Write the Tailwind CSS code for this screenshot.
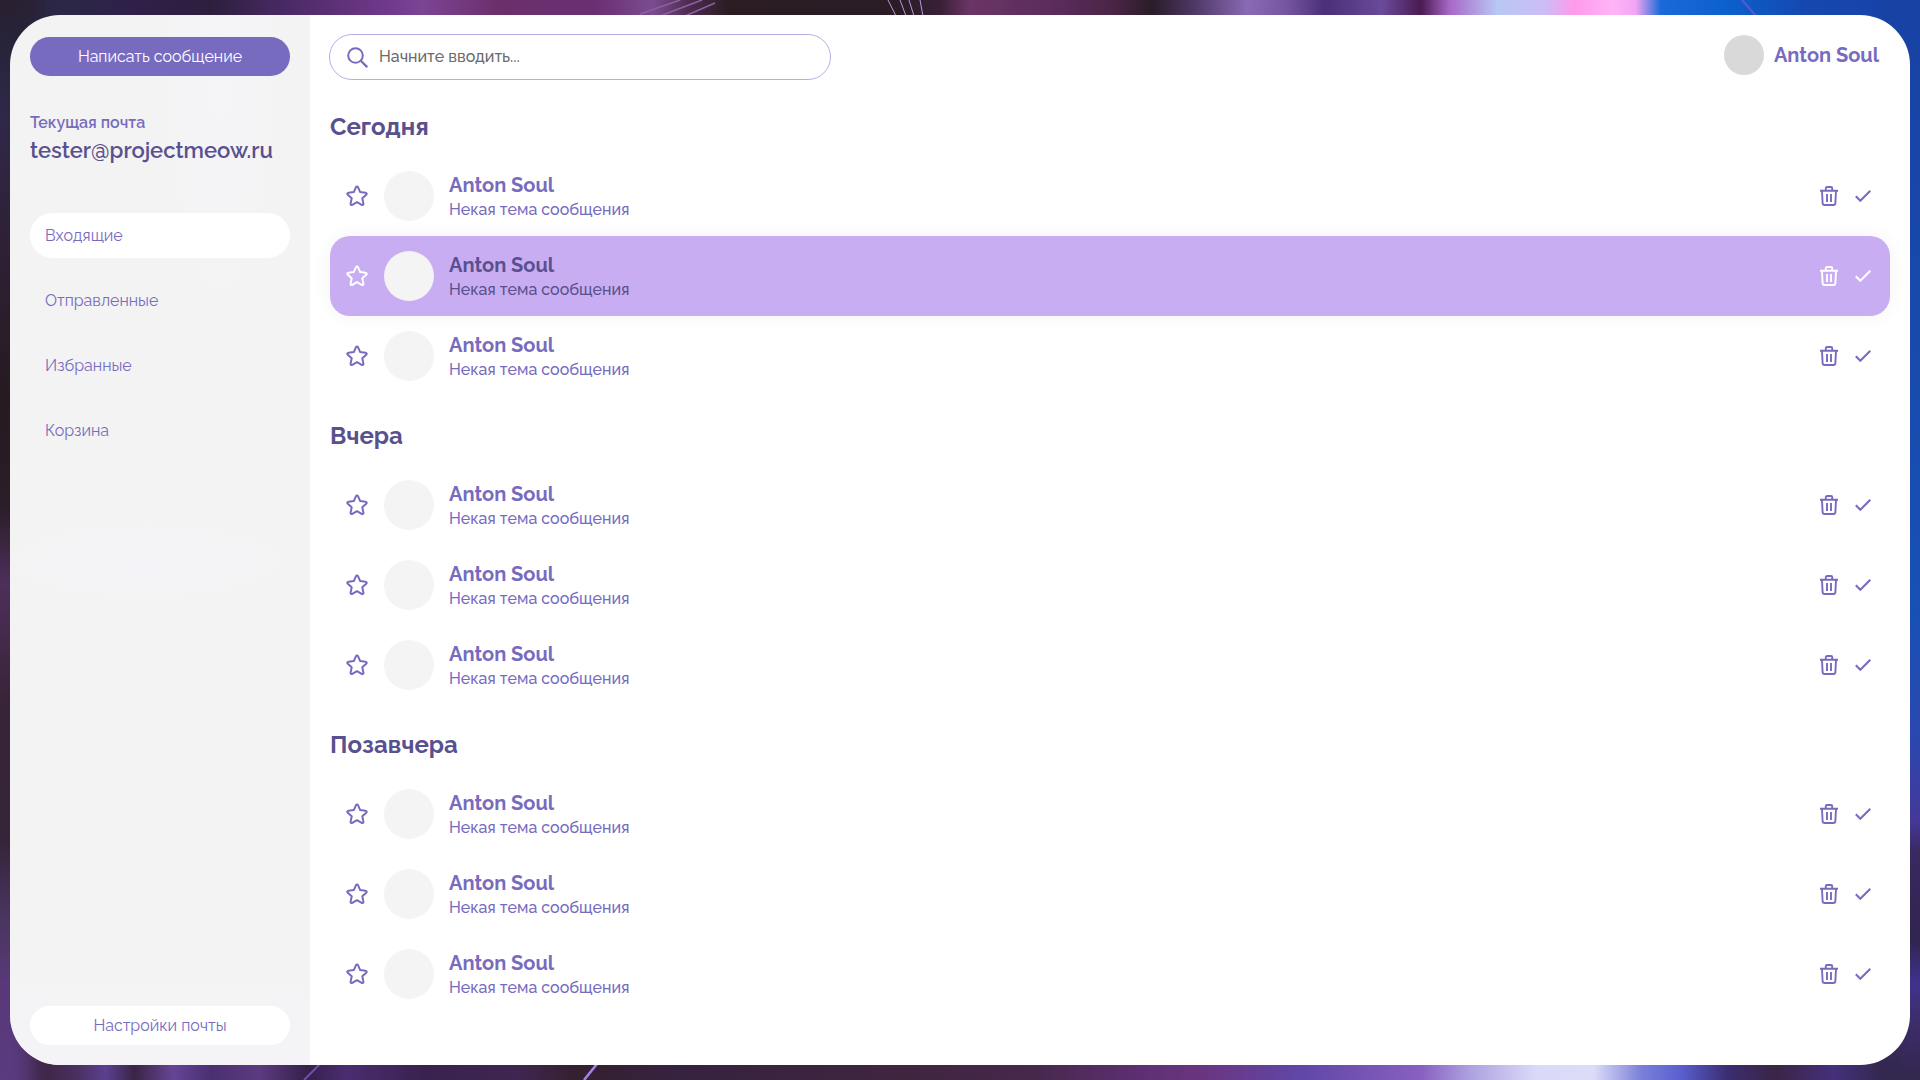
<!DOCTYPE html>
<html lang="ru">
<head>
<meta charset="utf-8">
<meta name="viewport" content="width=device-width, initial-scale=1">
<title>Входящие</title>
<script src="https://cdn.jsdelivr.net/npm/@tailwindcss/browser@4"></script>
</head>
<body class="font-['Raleway','Lato',sans-serif] text-base text-[#776bbf]">

<svg class="hidden" aria-hidden="true">
  <symbol id="star" viewBox="0 0 22 22"><path d="M11 1.500c.5 0 .8.3 1 .7l2.200 4.900 5.300.6c1.200.1 1.600 1.300.7 2.100l-3.900 3.500 1.100 5.300c.2 1.100-.8 1.800-1.700 1.300L11 17.200l-4.700 2.700c-.9.5-1.900-.2-1.700-1.300l1.100-5.300L1.800 9.800c-.9-.8-.5-2 .7-2.100l5.300-.6L10 2.200c.2-.4.5-.7 1-.7z" fill="none" stroke="currentColor" stroke-width="2" stroke-linejoin="round"/></symbol>
  <symbol id="trash" viewBox="0 0 18 20"><path d="M0 4.800h18M5.800 4.500V2.200Q5.800 1 7 1h4q1.200 0 1.200 1.200v2.300M2 5l.6 12q.1 2 2 2h8.800q1.900 0 2-2L16 5M7 8v8M11 8v8" fill="none" stroke="currentColor" stroke-width="1.900"/></symbol>
  <symbol id="check" viewBox="0 0 16 12"><path d="M.8 6.300 5.300 10.800 15.300.8" fill="none" stroke="currentColor" stroke-width="2"/></symbol>
</svg>

<div class="relative isolate flex min-h-screen px-[10px] py-[15px]">
  <!-- blurred wallpaper behind the window -->
  <div class="absolute inset-0 -z-10 overflow-hidden" aria-hidden="true">
    <div class="absolute inset-x-0 top-0 h-1/2 bg-[linear-gradient(90deg,#2b2033_0%,#2a2745_3%,#30204a_7%,#2c1f3e_11%,#4a2a66_15%,#70388a_20%,#7c4494_22%,#6b2f6b_26%,#6a2f72_31%,#7c4c90_34%,#4a2a4c_36%,#2a1c22_38%,#2a1c26_47%,#3a2038_49%,#6b3565_50.5%,#5a2c5c_55%,#4a2545_58%,#2a1c28_60%,#4a3560_62%,#8a6ab5_65%,#75559f_67%,#4a3078_69%,#6a4a9a_72%,#4a1a50_74%,#a868c8_75.5%,#b8c8f4_78%,#cdbcf6_80.5%,#ff9aea_82%,#ffb4f8_84%,#f0a4f4_85.2%,#1a6ad8_86.5%,#0c60cc_90%,#1548b0_94%,#1842a4_100%)]"></div>
    <div class="absolute inset-x-0 bottom-0 h-1/2 bg-[linear-gradient(90deg,#5a3b80_0%,#3a2540_2%,#4a3060_4%,#5a4090_5.5%,#3a2545_7%,#654496_9%,#4a3070_11%,#5c3a80_13.5%,#35204a_16%,#4a2d70_18%,#3a2250_22%,#3e2650_27%,#35202f_30%,#35223f_35%,#40253f_47%,#46284c_54%,#5c2f70_59%,#6a3580_62.5%,#6048a8_68%,#8860c0_74%,#aca0e0_76.500%,#dadaf8_80%,#dcdcf8_83%,#7a80d8_85.500%,#5a60d0_87.500%,#3a2d70_90%,#3a2545_92.500%,#44307c_95.500%,#34284f_98%,#33284e_100%)]"></div>
    <div class="absolute inset-y-0 left-0 w-12 bg-[linear-gradient(180deg,#2a2030_0%,#27243c_5%,#302848_11%,#2e2034_24%,#251b20_37%,#2a1e28_47%,#4d2f5a_54%,#382438_65%,#36243a_78%,#4a3560_85%,#583878_91%,#5a3b80_100%)] [mask-image:linear-gradient(90deg,#000_25%,transparent)]"></div>
    <div class="absolute inset-y-0 right-0 w-12 bg-[linear-gradient(180deg,#1842a4_0%,#1850b4_56%,#2a48b0_68%,#443898_76%,#3a2860_79%,#302450_87%,#40328c_91%,#3c2c68_95%,#33284e_100%)] [mask-image:linear-gradient(270deg,#000_25%,transparent)]"></div>
    <svg class="absolute bottom-0 left-0 h-4 w-[620px]" viewBox="0 0 620 16"><path d="M584 16 597 0" stroke="#9f86e8" stroke-width="2.500"/><path d="M304 16 320 0" stroke="#6f52a8" stroke-width="2"/></svg>
    <svg class="absolute right-0 top-0 h-4 w-[200px]" viewBox="0 0 200 16"><path d="M22 0 36 16" stroke="#5a58d0" stroke-width="2"/></svg>
    <svg class="absolute left-[640px] top-0 h-4 w-[340px]" viewBox="0 0 340 16" fill="none"><path d="M0 14 40 0M20 16 62 0M45 16 75 3" stroke="#8a62a0" stroke-width="1.500"/><path d="m248 0 8 16m4-16 6 16m3-16 5 16m6-16 3 16" stroke="#b79ade" stroke-width="1"/></svg>
  </div>

  <div class="flex flex-1 overflow-hidden rounded-[50px]">
    <aside class="flex w-[300px] shrink-0 flex-col bg-[#f3f3f3] bg-[radial-gradient(ellipse_at_70%_0%,#f5f4f8_0%,transparent_25%),radial-gradient(ellipse_180px_50px_at_45%_52%,#f5f3f8_0%,transparent_100%),linear-gradient(0deg,#f5f3f7_0%,transparent_12%)] px-5 pt-[22px] pb-5">
      <button type="button" class="h-[39px] rounded-[20px] bg-[#776bbf] text-white">Написать сообщение</button>
      <div class="mt-9 font-semibold">
        <p class="leading-[22px]">Текущая почта</p>
        <p class="text-[22px] leading-8 text-[#59508f]">tester@projectmeow.ru</p>
      </div>
      <nav class="mt-[47px] flex flex-col gap-5">
        <a href="#" class="flex h-[45px] items-center rounded-full bg-white px-[15px]" aria-current="page">Входящие</a>
        <a href="#" class="flex h-[45px] items-center rounded-full px-[15px]">Отправленные</a>
        <a href="#" class="flex h-[45px] items-center rounded-full px-[15px]">Избранные</a>
        <a href="#" class="flex h-[45px] items-center rounded-full px-[15px]">Корзина</a>
      </nav>
      <button type="button" class="mt-auto h-[39px] rounded-[20px] bg-white">Настройки почты</button>
    </aside>

    <main class="flex-1 bg-white px-5 pt-[19px]">
      <header class="flex h-[46px] items-start justify-between">
        <label class="-ml-px flex h-[46px] w-[502px] items-center gap-[11px] rounded-full border border-[#b7abe3] pl-[17px]">
          <svg class="size-[21px]" viewBox="0 0 21 21" fill="none" stroke="currentColor" aria-hidden="true"><circle cx="8.500" cy="8.500" r="7.300" stroke-width="2"/><path d="m13.800 13.800 6.400 6.400" stroke-width="2.300"/></svg>
          <input type="search" aria-label="Поиск" placeholder="Начните вводить..." class="min-w-0 flex-1 bg-transparent pr-4 font-medium text-[#6b6b6b] outline-none placeholder:text-[#6b6b6b]">
        </label>
        <a href="#" class="mt-px flex items-center gap-[10px] pr-[11px] text-xl font-bold"><span class="size-10 rounded-full bg-[#d9d9d9]"></span>Anton Soul</a>
      </header>
      <div id="groups" class="mt-8 flex flex-col gap-[25px]"></div>
    </main>
  </div>
</div>

<script>
  const groups = ["Сегодня", "Вчера", "Позавчера"];
  const row = (active) => `
    <li class="flex h-20 items-center rounded-[20px] pl-4 pr-[19px] ${active ? "bg-[#c9adf2] text-white shadow-[0_0_20px_rgba(0,0,0,0.05)]" : ""}">
      <button type="button" aria-label="В избранное"><svg class="size-[22px]"><use href="#star"/></svg></button>
      <span class="ml-4 size-[50px] rounded-full bg-[#f4f4f4]"></span>
      <a href="#" class="ml-[15px] flex-1 pt-px ${active ? "text-[#59508f]" : ""}">
        <span class="block text-xl leading-[26px] font-bold">Anton Soul</span>
        <span class="block leading-6 font-medium">Некая тема сообщения</span>
      </a>
      <button type="button" aria-label="Удалить"><svg class="h-5 w-[18px]"><use href="#trash"/></svg></button>
      <button type="button" aria-label="Прочитано" class="ml-[17px]"><svg class="h-3 w-4"><use href="#check"/></svg></button>
    </li>`;
  document.getElementById("groups").innerHTML = groups.map((title, g) => `
    <section>
      <h2 class="text-2xl leading-[30px] font-bold text-[#59508f]">${title}</h2>
      <ul class="mt-[14px]">${[0, 1, 2].map(i => row(g === 0 && i === 1)).join("")}</ul>
    </section>`).join("");
</script>
</body>
</html>
